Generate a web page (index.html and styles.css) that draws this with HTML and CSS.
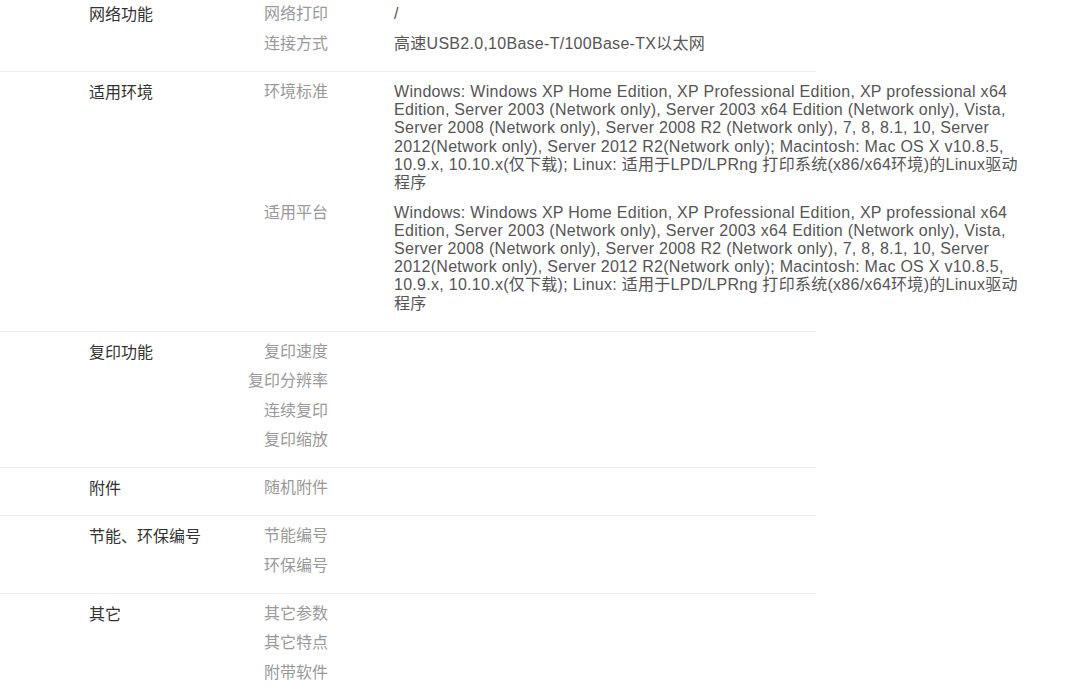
FILE: index.html
```html
<!DOCTYPE html>
<html lang="zh-CN">
  <head>
    <meta charset="UTF-8" />
    <meta name="viewport" content="width=device-width, initial-scale=1.0" />
    <title>详细参数</title>
    <link rel="stylesheet" href="styles.css">
  </head>
  <body>
    <div class="spec-table">
      <div class="spec-group first">
        <div class="group-name">网络功能</div>
        <div class="group-items">
          <div class="spec-item">
            <div class="item-name">网络打印</div>
            <div class="item-value">/</div>
          </div>
          <div class="spec-item">
            <div class="item-name">连接方式</div>
            <div class="item-value">高速USB2.0,10Base-T/100Base-TX以太网</div>
          </div>
        </div>
      </div>

      <div class="spec-group">
        <div class="group-name">适用环境</div>
        <div class="group-items">
          <div class="spec-item">
            <div class="item-name">环境标准</div>
            <div class="item-value">Windows: Windows XP Home Edition, XP Professional Edition, XP professional x64 Edition, Server 2003 (Network only), Server 2003 x64 Edition (Network only), Vista, Server 2008 (Network only), Server 2008 R2 (Network only), 7, 8, 8.1, 10, Server 2012(Network only), Server 2012 R2(Network only); Macintosh: Mac OS X v10.8.5, 10.9.x, 10.10.x(仅下载); Linux: 适用于LPD/LPRng 打印系统(x86/x64环境)的Linux驱动程序</div>
          </div>
          <div class="spec-item">
            <div class="item-name">适用平台</div>
            <div class="item-value">Windows: Windows XP Home Edition, XP Professional Edition, XP professional x64 Edition, Server 2003 (Network only), Server 2003 x64 Edition (Network only), Vista, Server 2008 (Network only), Server 2008 R2 (Network only), 7, 8, 8.1, 10, Server 2012(Network only), Server 2012 R2(Network only); Macintosh: Mac OS X v10.8.5, 10.9.x, 10.10.x(仅下载); Linux: 适用于LPD/LPRng 打印系统(x86/x64环境)的Linux驱动程序</div>
          </div>
        </div>
      </div>

      <div class="spec-group">
        <div class="group-name">复印功能</div>
        <div class="group-items">
          <div class="spec-item">
            <div class="item-name">复印速度</div>
            <div class="item-value"></div>
          </div>
          <div class="spec-item">
            <div class="item-name">复印分辨率</div>
            <div class="item-value"></div>
          </div>
          <div class="spec-item">
            <div class="item-name">连续复印</div>
            <div class="item-value"></div>
          </div>
          <div class="spec-item">
            <div class="item-name">复印缩放</div>
            <div class="item-value"></div>
          </div>
        </div>
      </div>

      <div class="spec-group">
        <div class="group-name">附件</div>
        <div class="group-items">
          <div class="spec-item">
            <div class="item-name">随机附件</div>
            <div class="item-value"></div>
          </div>
        </div>
      </div>

      <div class="spec-group">
        <div class="group-name">节能、环保编号</div>
        <div class="group-items">
          <div class="spec-item">
            <div class="item-name">节能编号</div>
            <div class="item-value"></div>
          </div>
          <div class="spec-item">
            <div class="item-name">环保编号</div>
            <div class="item-value"></div>
          </div>
        </div>
      </div>

      <div class="spec-group">
        <div class="group-name">其它</div>
        <div class="group-items">
          <div class="spec-item">
            <div class="item-name">其它参数</div>
            <div class="item-value"></div>
          </div>
          <div class="spec-item">
            <div class="item-name">其它特点</div>
            <div class="item-value"></div>
          </div>
          <div class="spec-item">
            <div class="item-name">附带软件</div>
            <div class="item-value"></div>
          </div>
        </div>
      </div>
    </div>
  </body>
</html>
```

FILE: styles.css
```css
html {
  background-color: #ffffff;
  font-family: "Liberation Sans", Arial, "Noto Sans CJK SC", sans-serif;
}

body {
  margin: 0;
  padding: 0;
  overflow: hidden;
}

.spec-table {
  width: 816px;
  margin-top: -6px;
}

.spec-group {
  display: flex;
  padding: 6px 0 11.5px;
  border-top: 1px solid #eeeeee;
}

.spec-group.first {
  border-top: none;
}

.group-name {
  width: 150px;
  padding-left: 89px;
  padding-top: 6px;
  font-size: 16px;
  line-height: 18px;
  color: #333333;
  flex-shrink: 0;
}

.group-items {
  flex: 1;
}

.spec-item {
  display: flex;
  padding: 5px 0 6.5px;
}

.item-name {
  width: 89px;
  text-align: right;
  font-size: 16px;
  line-height: 18px;
  color: #999999;
  flex-shrink: 0;
}

.item-value {
  margin-left: 66px;
  width: 630px;
  flex-shrink: 0;
  font-size: 16px;
  line-height: 18.2px;
  letter-spacing: 0.28px;
  color: #555555;
}
```
